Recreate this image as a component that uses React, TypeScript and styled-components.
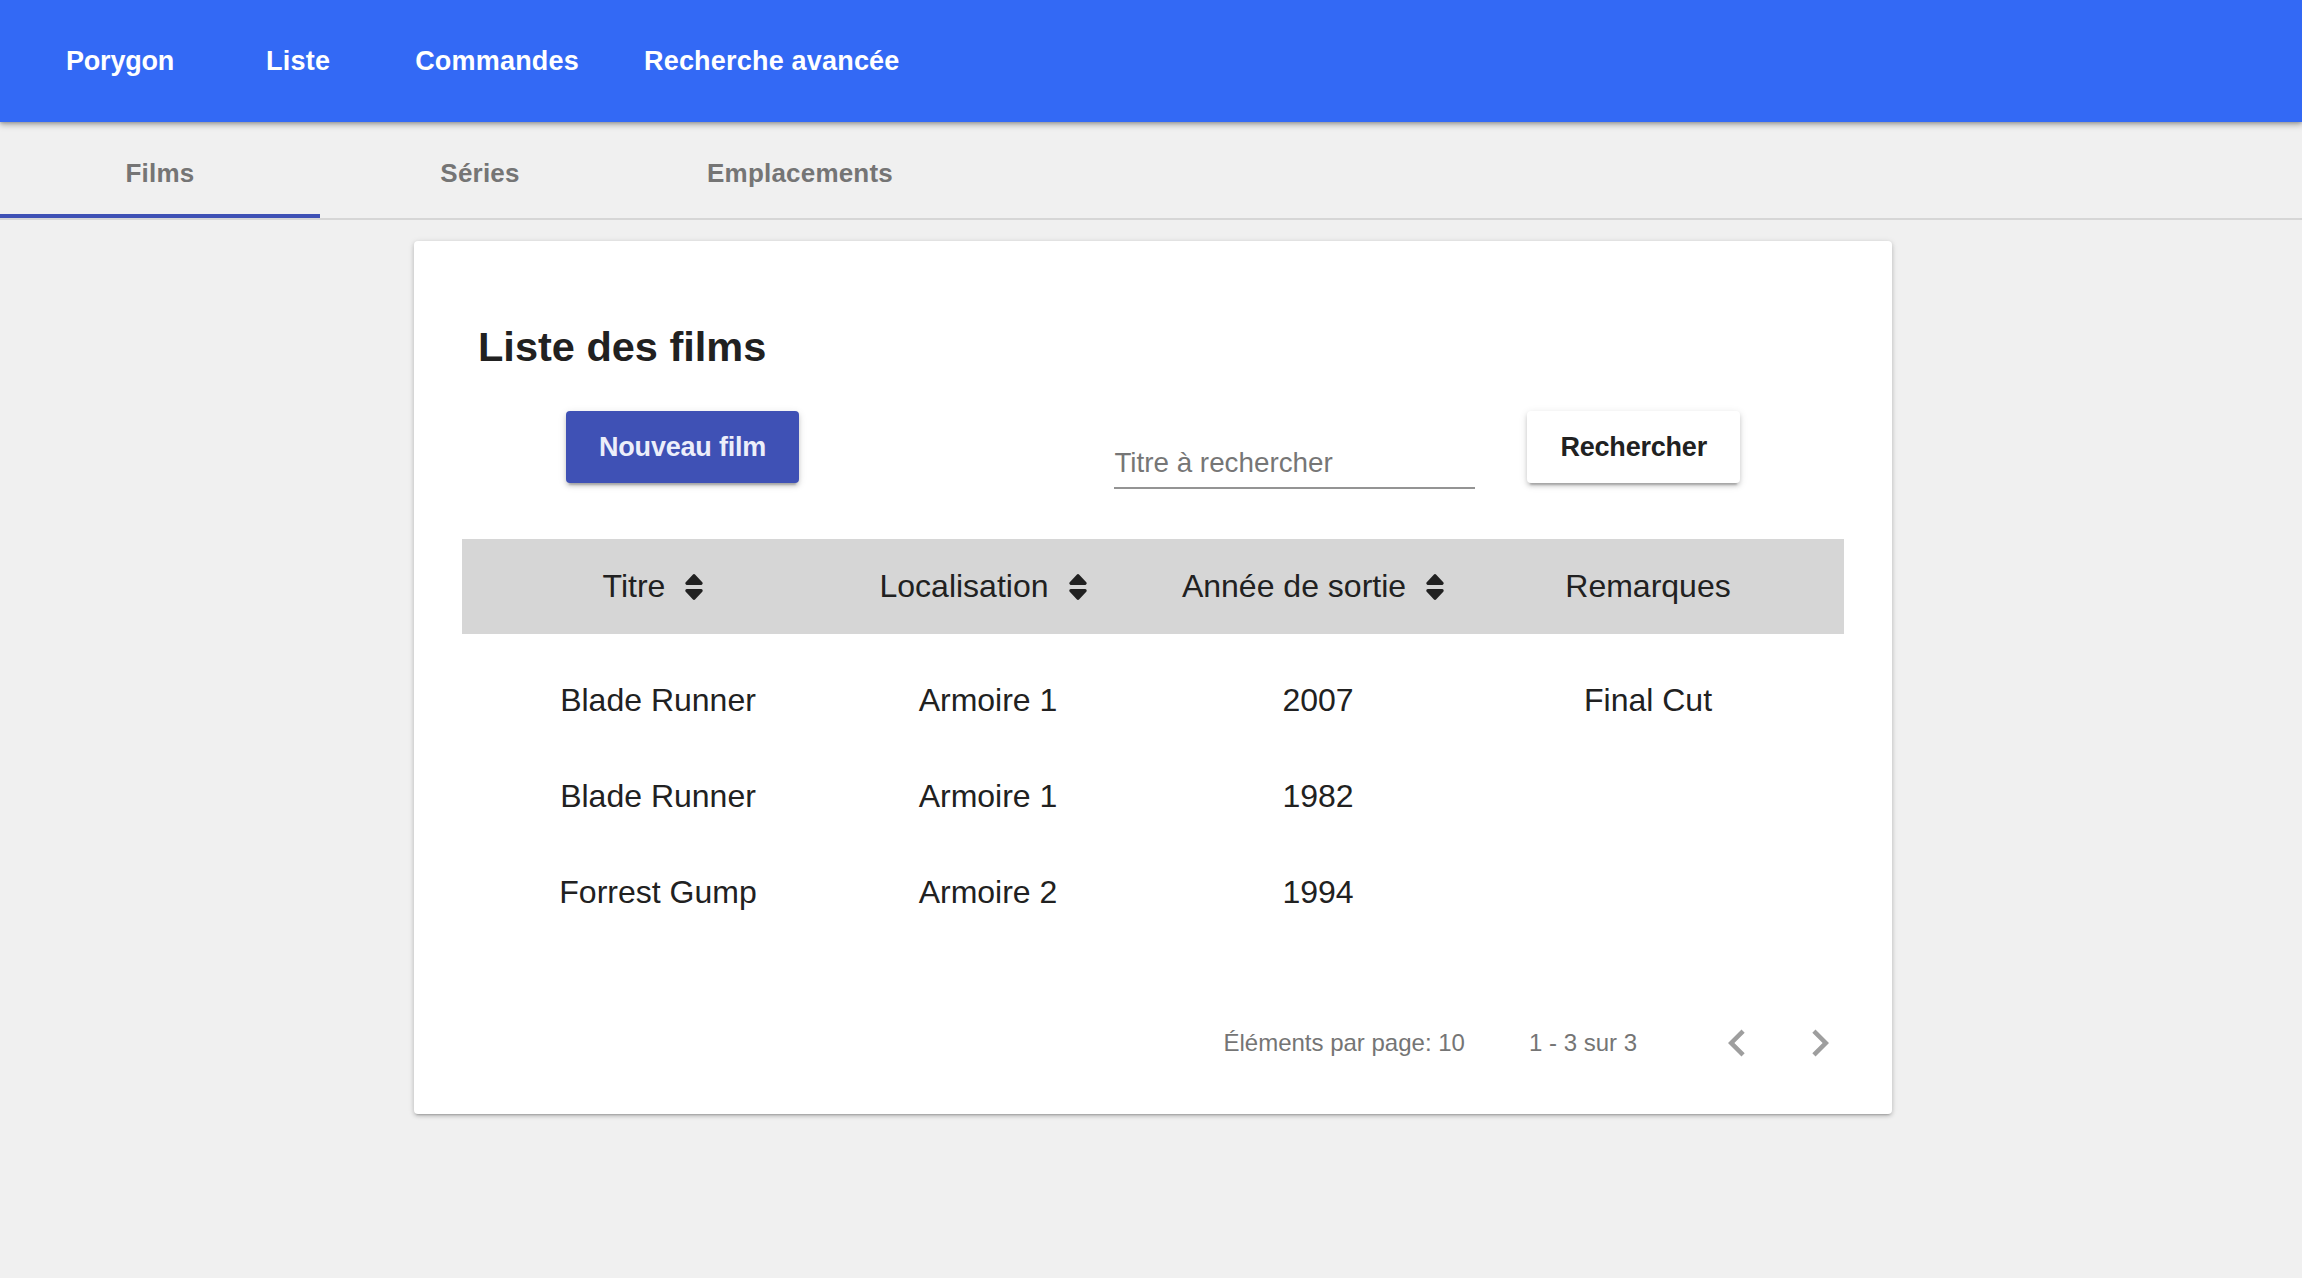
import React from "react";
import styled, { createGlobalStyle } from "styled-components";

const GlobalStyle = createGlobalStyle`
  html, body {
    margin: 0;
    padding: 0;
    background: #f0f0f0;
    font-family: "Liberation Sans", Arial, Helvetica, sans-serif;
    color: #212121;
  }
  * { box-sizing: border-box; }
`;

const Page = styled.div`
  min-height: 1278px;
  background: #f0f0f0;
`;

const Toolbar = styled.header`
  position: relative;
  z-index: 2;
  height: 122px;
  background: #3369f5;
  display: flex;
  align-items: center;
  padding-left: 64px;
  box-shadow: 0 3px 6px rgba(0, 0, 0, 0.28), 0 1px 3px rgba(0, 0, 0, 0.18);
`;

const NavLink = styled.a<{ $offset: number; $spacing?: number }>`
  margin-left: ${(p) => p.$offset}px;
  color: #ffffff;
  font-size: 27px;
  font-weight: 700;
  letter-spacing: ${(p) => p.$spacing ?? 0.2}px;
  text-decoration: none;
  white-space: nowrap;
  cursor: pointer;
`;

const TabBar = styled.nav`
  display: flex;
  height: 98px;
  border-bottom: 2px solid #d6d6d6;
`;

const Tab = styled.div<{ $active?: boolean }>`
  width: 320px;
  height: 96px;
  display: flex;
  align-items: center;
  justify-content: center;
  font-size: 26px;
  font-weight: 700;
  letter-spacing: 0.2px;
  color: #757575;
  border-bottom: 4px solid ${(p) => (p.$active ? "#3f51b5" : "transparent")};
  padding-top: 10px;
  cursor: pointer;
`;

const Card = styled.section`
  width: 1478px;
  margin: 21px 0 0 calc(50% - 737px);
  background: #ffffff;
  border-radius: 4px;
  padding: 16px 48px 15px;
  box-shadow: 0 3px 2px -2px rgba(0, 0, 0, 0.2), 0 2px 4px rgba(0, 0, 0, 0.14),
    0 1px 6px rgba(0, 0, 0, 0.12);
`;

const Title = styled.h2`
  margin: 66px 0 0 16px;
  font-size: 41.5px;
  line-height: 48px;
  font-weight: 700;
  color: #212121;
`;

const ActionRow = styled.div`
  margin-top: 40px;
  display: flex;
  align-items: flex-start;
  justify-content: space-between;
  padding: 0 104px;
`;

const SearchGroup = styled.form`
  display: flex;
  align-items: flex-start;
  gap: 52px;
`;

const RaisedButton = styled.button<{ $primary?: boolean }>`
  height: 72px;
  padding: 0 33px;
  border: none;
  border-radius: 4px;
  font-family: inherit;
  font-size: 27px;
  font-weight: 700;
  letter-spacing: -0.2px;
  cursor: pointer;
  background: ${(p) => (p.$primary ? "#3f51b5" : "#ffffff")};
  color: ${(p) => (p.$primary ? "#eceefa" : "#212121")};
  box-shadow: 0 5px 2px -3px rgba(0, 0, 0, 0.2), 0 3px 4px rgba(0, 0, 0, 0.14),
    0 2px 8px rgba(0, 0, 0, 0.12);
`;

const SearchField = styled.label`
  width: 361px;
  height: 78px;
  display: flex;
  align-items: flex-end;
  padding-bottom: 6px;
  border-bottom: 2px solid #949494;
`;

const SearchInput = styled.input`
  width: 100%;
  height: 36px;
  border: none;
  outline: none;
  padding: 0;
  background: transparent;
  font-family: inherit;
  font-size: 27.8px;
  line-height: 36px;
  color: #212121;
  &::placeholder {
    color: #767676;
  }
`;

const Table = styled.div`
  margin-top: 50px;
`;

const HeaderRow = styled.div`
  display: grid;
  grid-template-columns: repeat(4, 1fr);
  height: 95px;
  padding: 0 31px;
  background: #d6d6d6;
`;

const Body = styled.div`
  padding-top: 18px;
`;

const Row = styled.div`
  display: grid;
  grid-template-columns: repeat(4, 1fr);
  height: 96px;
  padding: 0 31px;
`;

const HeaderCell = styled.div`
  display: flex;
  align-items: center;
  justify-content: center;
  font-size: 32px;
  color: #212121;
  white-space: nowrap;
`;

const SortIcon = styled.svg`
  width: 18px;
  height: 26px;
  margin-left: 20px;
  margin-right: 10px;
  fill: #212121;
`;

const Cell = styled.div`
  display: flex;
  align-items: center;
  justify-content: center;
  font-size: 32px;
  color: #212121;
  white-space: nowrap;
`;

const Paginator = styled.div`
  margin: 47px -16px 0 0;
  height: 112px;
  display: flex;
  align-items: center;
  justify-content: flex-end;
  font-size: 24px;
  color: #757575;
`;

const RangeLabel = styled.span`
  margin: 0 60px 0 64px;
`;

const PageButtons = styled.div`
  display: flex;
  gap: 3px;
`;

const IconButton = styled.button`
  width: 80px;
  height: 80px;
  border: none;
  background: transparent;
  padding: 0;
  display: flex;
  align-items: center;
  justify-content: center;
  border-radius: 50%;
  cursor: default;
  svg {
    width: 54px;
    height: 54px;
    fill: #9e9e9e;
  }
`;

const Sort = () => (
  <SortIcon viewBox="12 57 296 398" preserveAspectRatio="none">
    <path d="M41 288h238c21.4 0 32.1 25.9 17 41L177 448c-9.4 9.4-24.6 9.4-33.9 0L24 329c-15.1-15.1-4.4-41 17-41zm255-105L177 64c-9.4-9.4-24.6-9.4-33.9 0L24 183c-15.1 15.1-4.4 41 17 41h238c21.4 0 32.1-25.9 17-41z" />
  </SortIcon>
);

const ChevronLeft = () => (
  <svg viewBox="0 0 24 24">
    <path d="M15.41 7.41L14 6l-6 6 6 6 1.41-1.41L10.83 12z" />
  </svg>
);

const ChevronRight = () => (
  <svg viewBox="0 0 24 24">
    <path d="M10 6L8.59 7.41 13.17 12l-4.58 4.59L10 18l6-6z" />
  </svg>
);

const films = [
  { titre: "Blade Runner", loc: "Armoire 1", annee: "2007", rem: "Final Cut" },
  { titre: "Blade Runner", loc: "Armoire 1", annee: "1982", rem: "" },
  { titre: "Forrest Gump", loc: "Armoire 2", annee: "1994", rem: "" },
];

export default function App() {
  return (
    <Page>
      <GlobalStyle />
      <Toolbar>
        <NavLink $offset={2} $spacing={-0.2}>
          Porygon
        </NavLink>
        <NavLink $offset={92}>Liste</NavLink>
        <NavLink $offset={85}>Commandes</NavLink>
        <NavLink $offset={65}>Recherche avancée</NavLink>
      </Toolbar>
      <TabBar>
        <Tab $active>Films</Tab>
        <Tab>Séries</Tab>
        <Tab>Emplacements</Tab>
      </TabBar>
      <Card>
        <Title>Liste des films</Title>
        <ActionRow>
          <RaisedButton $primary type="button">
            Nouveau film
          </RaisedButton>
          <SearchGroup onSubmit={(e) => e.preventDefault()}>
            <SearchField>
              <SearchInput placeholder="Titre à rechercher" />
            </SearchField>
            <RaisedButton type="submit">Rechercher</RaisedButton>
          </SearchGroup>
        </ActionRow>
        <Table>
          <HeaderRow>
            <HeaderCell>
              Titre
              <Sort />
            </HeaderCell>
            <HeaderCell>
              Localisation
              <Sort />
            </HeaderCell>
            <HeaderCell>
              Année de sortie
              <Sort />
            </HeaderCell>
            <HeaderCell>Remarques</HeaderCell>
          </HeaderRow>
          <Body>
            {films.map((f, i) => (
              <Row key={i}>
                <Cell>{f.titre}</Cell>
                <Cell>{f.loc}</Cell>
                <Cell>{f.annee}</Cell>
                <Cell>{f.rem}</Cell>
              </Row>
            ))}
          </Body>
        </Table>
        <Paginator>
          <span>Éléments par page: 10</span>
          <RangeLabel>1 - 3 sur 3</RangeLabel>
          <PageButtons>
            <IconButton type="button" aria-label="Page précédente">
              <ChevronLeft />
            </IconButton>
            <IconButton type="button" aria-label="Page suivante">
              <ChevronRight />
            </IconButton>
          </PageButtons>
        </Paginator>
      </Card>
    </Page>
  );
}
